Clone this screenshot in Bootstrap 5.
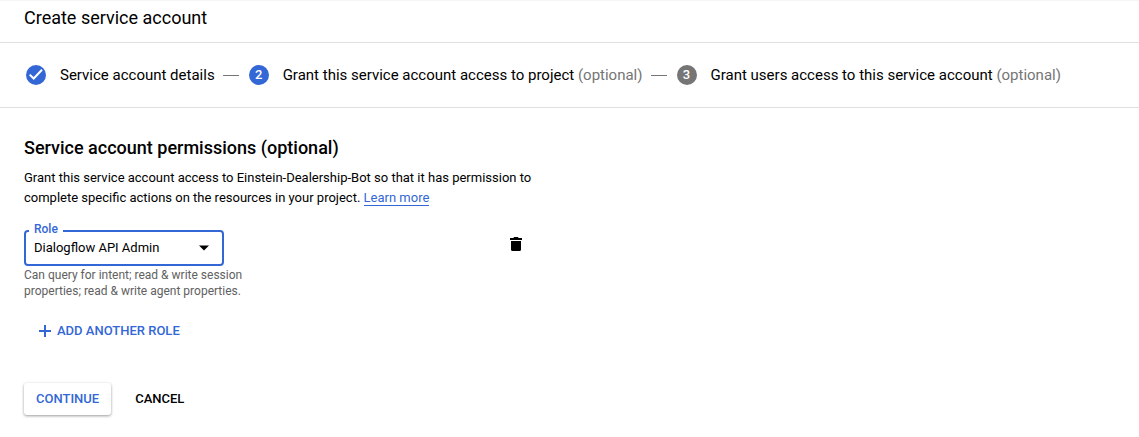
<!DOCTYPE html>
<html lang="en">
<head>
<meta charset="utf-8">
<meta name="viewport" content="width=device-width, initial-scale=1">
<title>Create service account</title>
<link href="https://cdn.jsdelivr.net/npm/bootstrap@5.3.0/dist/css/bootstrap.min.css" rel="stylesheet">
<style>
  :root { --brand: #3367d6; --rule: #e0e0e0; }
  body { font-family: Roboto, "Liberation Sans", sans-serif; font-size: 13px; line-height: 20px; color: #000; background: #fff; }
  .page-head { border-top: 1px solid #f6f6f6; border-bottom: 1px solid var(--rule); padding: 5px 24px 12px; }
  .page-head h1 { font-size: 18px; line-height: 24px; font-weight: 400; }
  .stepper { border-bottom: 1px solid var(--rule); padding: 20px 24px; font-size: 15px; line-height: 24px; }
  .stepper li { white-space: nowrap; }
  .step-dot { width: 20px; height: 20px; margin: 0 14px 0 2px; border-radius: 50%; background: var(--brand); color: #fff; font-size: 13px; font-weight: 500; }
  .step-dot.todo { background: #757575; }
  .optional { color: #757575; }
  .step-line { width: 16px; height: 1px; margin: 0 8px; background: #757575; }
  main { padding: 28px 24px 20px; }
  main h2 { font-size: 18px; line-height: 24px; font-weight: 500; margin-bottom: 8px; }
  .permissions { max-width: 512px; }
  .learn { color: var(--brand); text-decoration: none; border-bottom: 1px solid var(--brand); }
  .role-row { margin-top: 22px; }
  .role-box { width: 200px; }
  .role-box label { top: -9px; left: 5px; padding: 0 5px; background: #fff; color: var(--brand); font-size: 12px; line-height: 16px; font-weight: 500; }
  .role-box .form-select { height: 36px; padding: 0 32px 0 8px; border: 2px solid var(--brand); border-radius: 4px; color: #000; font-size: 13px; line-height: 20px; background-image: none; box-shadow: none; }
  .role-box svg { top: 15px; right: 14px; pointer-events: none; }
  .hint { width: 232px; margin-top: 1px; color: #616161; font-size: 12px; line-height: 16px; }
  .trash { margin: 5px 11px 0 0; line-height: 0; }
  .text-btn { font-size: 13px; line-height: 20px; font-weight: 500; border: 0; border-radius: 3px; padding: 6px 12px; }
  .text-btn.brand { color: var(--brand); }
  .add-role { margin-top: 16px; gap: 3px; }
  .actions { margin-top: 36px; gap: 12px; }
  .raised { background: #fff; box-shadow: 0 1px 3px rgba(0,0,0,.4); }
</style>
</head>
<body>
<header class="page-head"><h1 class="m-0">Create service account</h1></header>
<nav aria-label="Progress">
  <ol class="stepper list-unstyled d-flex align-items-center m-0">
    <li class="d-flex align-items-center">
      <span class="step-dot d-flex align-items-center justify-content-center">
        <svg width="20" height="20" viewBox="0 0 20 20" fill="none" stroke="#fff" stroke-width="2" aria-label="Done"><path d="M3.700 9.600 7.700 13.500 16 4.700"/></svg>
      </span>
      <span>Service account details</span>
    </li>
    <li class="step-line" aria-hidden="true"></li>
    <li class="d-flex align-items-center" aria-current="step">
      <span class="step-dot d-flex align-items-center justify-content-center">2</span>
      <span>Grant this service account access to project <span class="optional">(optional)</span></span>
    </li>
    <li class="step-line" aria-hidden="true"></li>
    <li class="d-flex align-items-center">
      <span class="step-dot todo d-flex align-items-center justify-content-center">3</span>
      <span>Grant users access to this service account <span class="optional">(optional)</span></span>
    </li>
  </ol>
</nav>
<main>
  <form class="permissions">
    <h2>Service account permissions (optional)</h2>
    <p class="m-0">Grant this service account access to Einstein-Dealership-Bot so that it has permission to complete specific actions on the resources in your project. <a class="learn" href="#">Learn more</a></p>
    <div class="role-row d-flex justify-content-between align-items-start">
      <div>
        <div class="role-box position-relative">
          <label class="position-absolute" for="role">Role</label>
          <select class="form-select" id="role" aria-describedby="role-hint"><option>Dialogflow API Admin</option></select>
          <svg class="position-absolute" width="12" height="6" viewBox="0 0 12 6" aria-hidden="true"><path d="M1 .5h10L6 5.5z"/></svg>
        </div>
        <div class="hint" id="role-hint">Can query for intent; read &amp; write session properties; read &amp; write agent properties.</div>
      </div>
      <button type="button" class="trash btn p-0 border-0" aria-label="Delete role">
        <svg width="18" height="18" viewBox="0 0 18 18" fill="#000" aria-hidden="true"><path d="M3 3h3.500l.5-1h4l.5 1H15v2H3zM4 6h10v8.500q0 1.500-1.500 1.500h-7Q4 16 4 14.500z"/></svg>
      </button>
    </div>
    <button type="button" class="add-role btn text-btn brand d-flex align-items-center">
      <svg width="18" height="18" viewBox="0 0 18 18" fill="none" stroke="currentColor" stroke-width="2" aria-hidden="true"><path d="M9 3v12M3 9h12"/></svg>ADD ANOTHER ROLE
    </button>
    <div class="actions d-flex">
      <button type="submit" class="btn text-btn brand raised">CONTINUE</button>
      <button type="button" class="btn text-btn text-black">CANCEL</button>
    </div>
  </form>
</main>
<script src="https://cdn.jsdelivr.net/npm/bootstrap@5.3.0/dist/js/bootstrap.bundle.min.js"></script>
</body>
</html>
